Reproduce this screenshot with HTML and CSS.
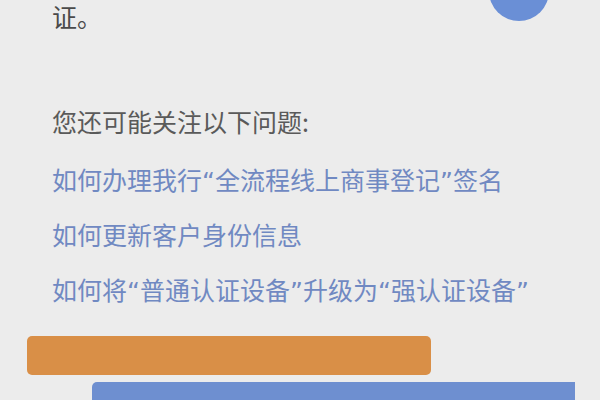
FILE: index.html
```html
<!DOCTYPE html>
<html lang="zh-CN">
<head>
<meta charset="utf-8">
<link rel="stylesheet" href="styles.css">
</head>
<body>
<div class="page">
  <div class="avatar"></div>
  <div class="content">
    <p class="tail">证。</p>
    <p class="title">您还可能关注以下问题:</p>
    <ul class="links">
      <li>如何办理我行<span class="q">“</span>全流程线上商事登记<span class="q">”</span>签名</li>
      <li>如何更新客户身份信息</li>
      <li>如何将<span class="q">“</span>普通认证设备<span class="q">”</span>升级为<span class="q">“</span>强认证设备<span class="q">”</span></li>
    </ul>
  </div>
  <div class="bar-orange"></div>
  <div class="bar-blue"></div>
</div>
</body>
</html>
```

FILE: styles.css
```css
html, body {
  margin: 0;
  padding: 0;
  background: #ececec;
}
.page {
  position: relative;
  width: 600px;
  height: 400px;
  overflow: hidden;
  background: #ececec;
  font-family: "Noto Sans CJK SC", "Noto Sans", sans-serif;
}
.avatar {
  position: absolute;
  left: 489px;
  top: -39px;
  width: 60px;
  height: 60px;
  border-radius: 50%;
  background: #6a8fd6;
}
.content {
  padding-left: 52px;
  padding-top: 1px;
  font-size: 25px;
  line-height: 55px;
}
.content p, .content ul {
  margin: 0;
  padding: 0;
}
.q {
  font-family: "DejaVu Sans", sans-serif;
  line-height: 1;
}
.tail {
  line-height: 30px;
  color: #4a4a4a;
}
.title {
  margin-top: 63px !important;
  margin-bottom: 3px !important;
  color: #5a5a5a;
}
.links {
  list-style: none;
  color: #7089c2;
}
.bar-orange {
  margin: 19px 0 0 27px;
  width: 404px;
  height: 39px;
  border-radius: 5px;
  background: #d98f47;
}
.bar-blue {
  margin: 7px 0 0 92px;
  width: 483px;
  height: 40px;
  border-radius: 5px 0 0 0;
  background: #6e8fd0;
}
```
